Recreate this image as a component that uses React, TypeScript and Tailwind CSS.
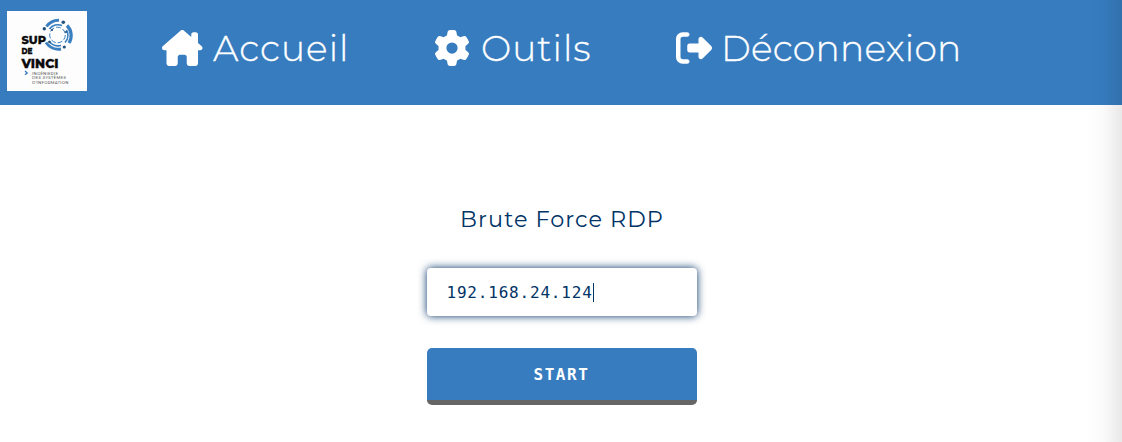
import React from "react";
import { FaHouseChimney, FaGear, FaRightFromBracket } from "react-icons/fa6";

function Logo() {
  return (
    <svg viewBox="0 0 80 80" className="block h-20 w-20 bg-[#fdfdfd]" role="img" aria-label="Sup de Vinci">
      <g fill="none" stroke="#3a7fc0">
        <path d="M39.500 15.500A15 15 0 0 1 52 9.200" strokeWidth="3" />
        <path d="M60 14.500A14 14 0 0 1 62 32" strokeWidth="3.200" />
        <path d="M39 31.500A15 15 0 0 0 54 38" strokeWidth="3" />
        <path d="M42.500 18A11 11 0 0 1 55 14.500" strokeWidth="1.800" />
        <path d="M59.500 19A11 11 0 0 1 58 31.500" strokeWidth="1.600" />
        <path d="M42 30A11 11 0 0 0 54 34.500" strokeWidth="1.800" />
        <circle cx="50.500" cy="24" r="7.800" strokeWidth="1" strokeDasharray="5 2" />
      </g>
      <g fill="#23527f">
        <circle cx="37.300" cy="17.700" r="1.700" />
        <circle cx="56.300" cy="11.300" r="1.800" />
        <circle cx="57.300" cy="36" r="1.600" />
        <circle cx="42.500" cy="31" r="1.300" />
        <circle cx="45" cy="19" r="1.100" />
        <circle cx="59" cy="21" r="1" />
      </g>
      <g fill="#0b0b0b" stroke="#0b0b0b" strokeWidth=".3" fontFamily="Montserrat, Lato, sans-serif" fontWeight="800">
        <text x="14.500" y="32.700" fontSize="11.500" textLength="24.500" lengthAdjust="spacingAndGlyphs">SUP</text>
        <text x="14.500" y="43.300" fontSize="8.200" textLength="11" lengthAdjust="spacingAndGlyphs">DE</text>
        <text x="14.500" y="56.500" fontSize="12" textLength="37" lengthAdjust="spacingAndGlyphs">VINCI</text>
      </g>
      <path d="m18 60 2.200 1.900-2.200 1.900" fill="none" stroke="#357abd" strokeWidth="1.300" />
      <g fill="#555" fontFamily="Montserrat, Inter, sans-serif" fontWeight="500" fontSize="3.900">
        <text x="25" y="63.500" textLength="26">INGÉNIERIE</text>
        <text x="25" y="68.300" textLength="34">DES SYSTÈMES</text>
        <text x="25" y="73" textLength="36.500">D’INFORMATION</text>
      </g>
    </svg>
  );
}

const navLink = "flex h-[50px] items-center text-[36px] font-light leading-none text-white";

export default function App() {
  return (
    <div className="relative h-[442px] w-full overflow-hidden bg-white font-['Montserrat','Inter',sans-serif]">
      <header className="flex h-[105px] items-start bg-[#367cbf] pl-[7px] pt-[11px]">
        <Logo />
        <nav className="ml-[75px] mt-[12px] flex">
          <a className={`${navLink} w-[272px]`}>
            <FaHouseChimney className="mr-[10.500px] h-9 w-[40.500px] shrink-0" />
            <span className="pb-px tracking-[1.050px] [-webkit-text-stroke:0.300px_white]">Accueil</span>
          </a>
          <a className={`${navLink} w-[242px]`}>
            <FaGear className="mr-[11px] h-9 w-9 shrink-0" />
            <span className="pb-px tracking-[1px] [-webkit-text-stroke:0.300px_white]">Outils</span>
          </a>
          <a className={navLink}>
            <FaRightFromBracket className="mr-[9px] h-9 w-9 shrink-0" />
            <span className="pb-px tracking-[0.300px] [-webkit-text-stroke:0.300px_white]">Déconnexion</span>
          </a>
        </nav>
      </header>
      <main className="mx-auto w-[272px] pl-[2px] pt-[98px]">
        <h1 className="whitespace-nowrap text-center text-[22.400px] font-normal leading-8 tracking-[1.050px] text-[#003366]">Brute Force RDP</h1>
        <div className="mt-[33px] flex h-[48px] w-full items-center rounded-[4px] bg-white pl-[19.500px] pt-0.5 font-['DejaVu_Sans_Mono',monospace] text-base tracking-[0.800px] text-[#003366] shadow-[0_0_8px_#003366]">
          <span>192.168.24.124</span>
          <span className="-mt-0.5 h-[19px] w-px bg-[#003366]" />
        </div>
        <button className="mt-8 h-[57px] w-full rounded-[5px] border-b-[5px] border-[#666] bg-[#367cbf] pt-px pr-px font-['DejaVu_Sans_Mono',monospace] text-base font-bold tracking-[1.600px] text-white">START</button>
      </main>
      <div className="pointer-events-none absolute inset-y-0 right-0 w-9 bg-gradient-to-r from-transparent via-black/[0.020] to-black/[0.090]" />
    </div>
  );
}
